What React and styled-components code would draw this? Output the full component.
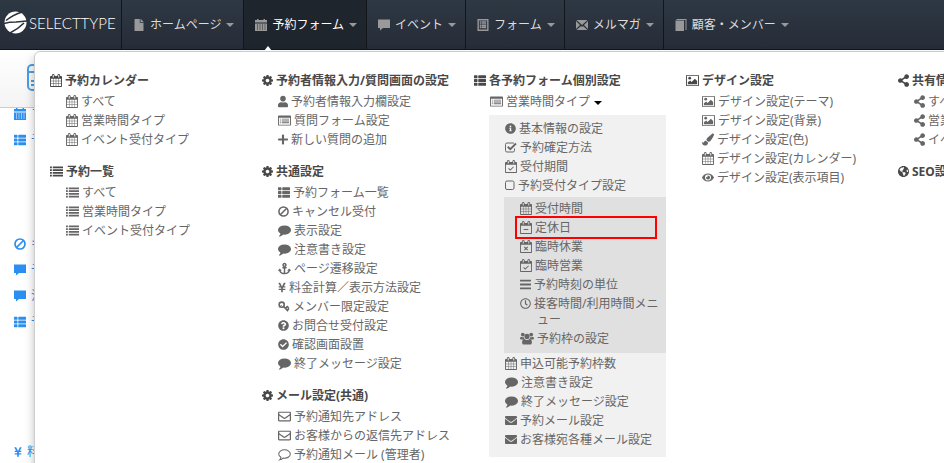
import React from 'react';
import styled, { createGlobalStyle, css } from 'styled-components';
import {
	FaUser, FaPlus, FaThList, FaAnchor, FaYenSign, FaQuestionCircle,
	FaCheckCircle, FaRegEnvelope, FaInfoCircle, FaBars, FaRegClock,
	FaEnvelope, FaPaintBrush, FaEye, FaShareAlt, FaGlobeAmericas, FaFile,
} from 'react-icons/fa';

const GlobalStyle = createGlobalStyle`
	* {
		box-sizing: border-box;
	}
	body {
		margin: 0;
		background: #fff;
		font-family: "Noto Sans", "Noto Sans CJK JP", sans-serif;
		font-size: 12px;
		line-height: 16px;
		color: #666;
	}
	a {
		color: inherit;
		text-decoration: none;
	}
	ul {
		list-style: none;
		margin: 0;
		padding: 0;
	}
`;

/* ---------- icons ---------- */

const calendarFrame = 'M640 480v-288q0-13-9.5-22.5t-22.5-9.5h-64q-13 0-22.5 9.5t-9.5 22.5v288q0 13 9.5 22.5t22.5 9.5h64q13 0 22.5-9.5t9.5-22.5zM1408 480v-288q0-13-9.5-22.5t-22.5-9.5h-64q-13 0-22.5 9.5t-9.5 22.5v288q0 13 9.5 22.5t22.5 9.5h64q13 0 22.5-9.5t9.5-22.5zM1792 416v1280q0 52-38 90t-90 38h-1408q-52 0-90-38t-38-90v-1280q0-52 38-90t90-38h128v-96q0-66 47-113t113-47h64q66 0 113 47t47 113v96h384v-96q0-66 47-113t113-47h64q66 0 113 47t47 113v96h128q52 0 90 38t38 90z';

const CalendarBase = ({ holes, children, ...rest }) => (
	<svg viewBox="128 22 1664 1802" fill="currentColor" {...rest}>
		<path fillRule="evenodd" d={`${calendarFrame}${holes}`} />
		{children}
	</svg>
);
const gridHoles = [[256, 288], [608, 320], [992, 320], [1376, 288]]
	.map(([x, w]) => [[672, 288], [1024, 288], [1376, 320]]
		.map(([y, h]) => `M${x} ${y}h${w}v${h}h-${w}z`).join(''))
	.join('');
const pageHole = 'M256 672h1408v1024h-1408z';

const Calendar = props => <CalendarBase holes={gridHoles} {...props} />;
const CalendarMinus = props => (
	<CalendarBase holes={pageHole} {...props}><path d="M640 1120h640v150h-640z" /></CalendarBase>
);
const CalendarTimes = props => (
	<CalendarBase holes={pageHole} {...props}>
		<path d="M720 960l480 480M1200 960l-480 480" stroke="currentColor" strokeWidth="150" />
	</CalendarBase>
);
const CalendarCheck = props => (
	<CalendarBase holes={pageHole} {...props}>
		<path d="M620 1180l240 240 460-460" fill="none" stroke="currentColor" strokeWidth="140" />
	</CalendarBase>
);
const CalendarSolid = props => (
	<svg viewBox="0 0 24 24" fill="currentColor" {...props}>
		<path fillRule="evenodd" d="M4 0h3v2h10v-2h3v2h4v5h-24v-5h4zM0 9h24v15h-24zM4 11v2h2v-2zM9 11v2h2v-2zM14 11v2h2v-2zM19 11v2h2v-2zM4 15v2h2v-2zM9 15v2h2v-2zM14 15v2h2v-2zM19 15v2h2v-2zM4 19v2h2v-2zM9 19v2h2v-2zM14 19v2h2v-2zM19 19v2h2v-2z" />
	</svg>
);
const List = props => (
	<svg viewBox="0 0 28 24" fill="currentColor" {...props}>
		<path d="M0 1h4v4h-4zM6 1h22v4h-22zM0 7h4v4h-4zM6 7h22v4h-22zM0 13h4v4h-4zM6 13h22v4h-22zM0 19h4v4h-4zM6 19h22v4h-22z" />
	</svg>
);
const ListAlt = props => (
	<svg viewBox="0 0 28 24" fill="currentColor" {...props}>
		<path fillRule="evenodd" d="M2 1h24q2 0 2 2v18q0 2-2 2h-24q-2 0-2-2v-18q0-2 2-2zM2 6v15h24v-15z" />
		<path d="M4 8h2v2h-2zM8 8h16v2h-16zM4 12h2v2h-2zM8 12h16v2h-16zM4 16h2v2h-2zM8 16h16v2h-16z" />
	</svg>
);
const FormList = props => (
	<svg viewBox="0 0 24 26" fill="currentColor" {...props}>
		<path fillRule="evenodd" d="M0 0h24v26h-24zM3 3v20h18v-20z" />
		<path d="M5 5h3v3h-3zM9 5h10v3h-10zM5 9h3v3h-3zM9 9h10v3h-10zM5 13h3v3h-3zM9 13h10v3h-10zM5 17h3v3h-3zM9 17h10v3h-10z" />
	</svg>
);
const Cog = props => (
	<svg viewBox="128 128 1536 1536" fill="currentColor" {...props}>
		<path d="M1152 896q0-106-75-181t-181-75-181 75-75 181 75 181 181 75 181-75 75-181zm512-109v222q0 12-8 23t-20 13l-185 28q-19 54-39 91 35 50 107 138 10 12 10 25t-9 23q-27 37-99 108t-94 71q-12 0-26-9l-138-108q-44 23-91 38-16 136-29 186-7 28-36 28h-222q-14 0-24.5-8.5t-11.5-21.5l-28-184q-49-16-90-37l-141 107q-10 9-25 9-14 0-25-11-126-114-165-168-7-10-7-23 0-12 8-23 15-21 51-66.5t54-70.5q-27-50-41-99l-183-27q-13-2-21-12.5t-8-23.5v-222q0-12 8-23t19-13l186-28q14-46 39-92-40-57-107-138-10-12-10-24 0-10 9-23 26-36 98.5-107.5t94.5-71.5q13 0 26 10l138 107q44-23 91-38 16-136 29-186 7-28 36-28h222q14 0 24.5 8.5t11.5 21.5l28 184q49 16 90 37l142-107q9-9 24-9 13 0 25 10 129 119 165 170 7 8 7 22 0 12-8 23-15 21-51 66.5t-54 70.5q26 50 41 98l183 28q13 2 21 12.5t8 23.5z" />
	</svg>
);
const Ban = props => (
	<svg viewBox="0 0 24 24" fill="none" stroke="currentColor" strokeWidth="3.4" {...props}>
		<circle cx="12" cy="12" r="10" />
		<path d="M5 19l14-14" />
	</svg>
);
const Key = props => (
	<svg viewBox="0 0 26 24" fill="none" stroke="currentColor" strokeWidth="3.4" {...props}>
		<circle cx="8" cy="8" r="5.5" />
		<path d="M12 12l10 10M16 16l4-4 3 3M20 20l4-4" />
		<path d="M3 14l5-5" strokeWidth="2" />
	</svg>
);
const Picture = props => (
	<svg viewBox="0 0 28 24" fill="currentColor" {...props}>
		<path fillRule="evenodd" d="M2 0h24q2 0 2 2v20q0 2-2 2h-24q-2 0-2-2v-20q0-2 2-2zM2 2v20h24v-20z" />
		<path d="M4 20v-4l5-4 3 3 7-7 5 5v7z" />
		<circle cx="8" cy="7" r="3" />
	</svg>
);
const Envelope = props => (
	<svg viewBox="0 0 24 20" fill="currentColor" {...props}>
		<path d="M1 0h22l-11 10zM0 2l8 8-8 8zM24 2l-8 8 8 8zM1 20l9-8 2 2 2-2 9 8z" />
	</svg>
);
const Notebook = props => (
	<svg viewBox="0 0 22 24" fill="currentColor" {...props}>
		<path d="M0 3h17v21h-17zM2 0h20v22h-2v-20h-18z" />
	</svg>
);
const Comment = props => (
	<svg viewBox="0 128 1792 1664" fill="currentColor" {...props}>
		<path d="M1792 896q0 174-120 321.5t-326 233-450 85.500q-70 0-145-8-198 175-460 242-49 14-114 22-17 2-30.500-9t-17.500-29v-1q-3-4-.5-12t2-10 4.500-9.500l6-9 7-8.500 8-9q7-8 31-34.500t34.500-38 31-39.500 32.500-51 27-59 26-76q-157-89-247.500-220t-90.500-281q0-130 71-248.500t191-204.500 286-136.500 348-50.500 348 50.500 286 136.500 191 204.500 71 248.500z" />
	</svg>
);
const CommentOutline = props => (
	<svg viewBox="0 0 28 26" fill="none" stroke="currentColor" strokeWidth="2.2" {...props}>
		<path d="M14 3c7 0 12.500 4 12.500 9s-5.500 9-12.500 9q-1.500 0-3-.2q-3 2.700-7.500 3.700q2.500-2.500 3-5.500q-5-2.500-5-7c0-5 5.500-9 12.500-9z" />
	</svg>
);
const Bubble = props => (
	<svg viewBox="0 0 24 22" fill="currentColor" {...props}>
		<path d="M0 0h24v17h-14l-6 5v-5h-4z" />
	</svg>
);
const Square = props => (
	<svg viewBox="0 0 20 20" fill="none" stroke="currentColor" strokeWidth="2" {...props}>
		<rect x="1" y="1" width="17" height="17" rx="3" />
	</svg>
);
const CheckSquare = props => (
	<svg viewBox="0 0 24 22" fill="none" stroke="currentColor" {...props}>
		<path d="M18 2.500q-1-.500-2-.500h-12q-3 0-3 3v12q0 3 3 3h12q3 0 3-3v-4" strokeWidth="2" />
		<path d="M5.500 9.500l5 5 11.500-11.500" strokeWidth="3.600" />
	</svg>
);
const Users = props => (
	<svg viewBox="0 0 30 26" fill="currentColor" {...props}>
		<circle cx="6" cy="4.500" r="4" />
		<circle cx="24" cy="4.500" r="4" />
		<circle cx="15" cy="8.500" r="5.500" />
		<path d="M0 14q0-5 3-5q2 1.500 5 1q0 3 2 5h-7q-3 0-3-1zM30 14q0-5-3-5q-2 1.500-5 1q0 3-2 5h7q3 0 3-1z" />
		<path d="M9.500 14q2 2 5.500 2t5.500-2q5 0 5 8q0 4-4 4h-13q-4 0-4-4q0-8 5-8z" />
	</svg>
);

/* ---------- top bar ---------- */

const Page = styled.div`
	position: relative;
	height: 100vh;
	overflow: hidden;
`;
const TopBar = styled.header`
	display: flex;
	height: 50px;
	background: linear-gradient(#2d3843, #272c38);
	border-bottom: 1px solid #12161b;
`;
const Brand = styled.a`
	display: flex;
	align-items: center;
	gap: 2px;
	width: 121px;
	padding: 0 0 4px 4px;
	color: #fff;
	font-family: Lato, sans-serif;
	font-size: 15px;
	font-weight: 300;
	svg {
		flex: none;
		width: 23px;
		height: 23px;
	}
`;
const Nav = styled.nav`
	display: flex;
`;
const NavLink = styled.a`
	position: relative;
	display: flex;
	align-items: center;
	gap: 5px;
	padding: 0 9px 0 11px;
	border-left: 1px solid #12161b;
	color: ${props => (props.$active ? '#fff' : '#ddd')};
	background: ${props => (props.$active ? '#1f252c' : 'none')};
	white-space: nowrap;
	> svg {
		width: 12px;
		height: 12px;
		color: #999;
	}
	${props => props.$active && css`
		&::after {
			content: '';
			position: absolute;
			z-index: 3;
			left: 20px;
			bottom: -2px;
			border: 4px solid transparent;
			border-top: 0;
			border-bottom: 5px solid #fff;
		}
	`}
`;
const Caret = styled.span`
	display: inline-block;
	border: 4px solid transparent;
	border-top-color: ${props => (props.$dark ? '#000' : '#999')};
	border-bottom: 0;
	vertical-align: ${props => (props.$dark ? '1px' : 'middle')};
	margin-left: ${props => (props.$dark ? 4 : 0)}px;
`;

/* ---------- page behind the menu ---------- */

const TitleBand = styled.div`
	height: 58px;
	padding: 14px 27px;
	border-bottom: 1px solid #ccc;
	background: linear-gradient(#fff, #f4f4f4);
	color: #4a9fe8;
	svg {
		display: block;
		width: 27px;
		height: 27px;
	}
`;
const SideList = styled.ul`
	padding: 0 14px;
	color: #2a8ff0;
`;
const SideItem = styled.li`
	display: flex;
	align-items: flex-start;
	gap: 5px;
	height: 26px;
	margin-top: ${props => (props.$skip || 0) * 26}px;
	line-height: 12px;
	svg {
		width: ${props => (props.$narrow ? 8 : 12)}px;
		height: 12px;
	}
`;

/* ---------- mega menu ---------- */

const MegaMenu = styled.div`
	position: absolute;
	z-index: 2;
	top: 51px;
	left: 34px;
	right: -8px;
	display: flex;
	padding: 19px 15px 40px;
	border: 1px solid #ccc;
	border-radius: 6px;
	background: #fff;
	box-shadow: 0 5px 10px rgba(0, 0, 0, 0.25);
	overflow: hidden;
`;
const Column = styled.div`
	flex: none;
	width: 212px;
`;
const Group = styled.section`
	margin-bottom: 13px;
`;
const rowText = css`
	margin: 0;
	padding: 2px 0 1px;
	font-size: 12px;
	line-height: 16px;
`;
const Heading = styled.h2`
	${rowText}
	margin-bottom: 2px;
	font-weight: bold;
	color: #484848;
	white-space: nowrap;
`;
const Entry = styled.li`
	${rowText}
	position: relative;
	padding-left: 33px;
	text-indent: -17px;
	line-break: normal;
	${props => props.$marked && css`
		&::after {
			content: '';
			position: absolute;
			top: -2px;
			bottom: -2px;
			left: 11px;
			right: 9px;
			border: 2px solid #f00;
		}
	`}
`;
const Glyph = styled.span`
	display: inline-block;
	width: ${props => props.$width}px;
	height: 13px;
	margin-right: 3px;
	vertical-align: -2px;
	text-indent: 0;
	svg {
		display: block;
		width: 100%;
		height: 13px;
	}
`;
const SubMenu = styled.ul`
	width: 177px;
	margin: 4px 0 0 15px;
	padding: 4px 0 8px;
	background: #f1f1f1;
`;
const InnerMenu = styled.ul`
	margin: 2px 0 1px 15px;
	padding: 2px 0 5px;
	background: #e0e0e0;
`;

const icons = {
	calendar: [Calendar, 12],
	calMinus: [CalendarMinus, 12],
	calTimes: [CalendarTimes, 12],
	calCheck: [CalendarCheck, 12],
	list: [List, 13],
	listAlt: [ListAlt, 13],
	cog: [Cog, 11],
	user: [FaUser, 10],
	plus: [FaPlus, 10],
	thList: [FaThList, 12],
	ban: [Ban, 11],
	comment: [Comment, 13],
	commentO: [CommentOutline, 13],
	anchor: [FaAnchor, 13],
	yen: [FaYenSign, 8],
	key: [Key, 12],
	question: [FaQuestionCircle, 11],
	check: [FaCheckCircle, 11],
	mail: [FaRegEnvelope, 13],
	info: [FaInfoCircle, 11],
	checkSq: [CheckSquare, 12],
	square: [Square, 10],
	bars: [FaBars, 11],
	clock: [FaRegClock, 11],
	users: [Users, 14],
	envelope: [FaEnvelope, 12],
	picture: [Picture, 13],
	brush: [FaPaintBrush, 12],
	eye: [FaEye, 12],
	share: [FaShareAlt, 11],
	globe: [FaGlobeAmericas, 11],
};

const Icon = ({ name }) => {
	const [Drawing, width] = icons[name];
	return <Glyph $width={width}><Drawing aria-hidden="true" /></Glyph>;
};

const Items = ({ rows }) => rows.map(([icon, text, marked]) => (
	<Entry key={text} $marked={marked}>
		<a href="#"><Icon name={icon} />{text}</a>
	</Entry>
));

const MenuGroup = ({ icon, title, rows, children }) => (
	<Group>
		<Heading><Icon name={icon} />{title}</Heading>
		{rows && <ul><Items rows={rows} /></ul>}
		{children}
	</Group>
);

const nav = [
	[FaFile, 'ホームページ'],
	[CalendarSolid, '予約フォーム', true],
	[Bubble, 'イベント'],
	[FormList, 'フォーム'],
	[Envelope, 'メルマガ'],
	[Notebook, '顧客・メンバー'],
];

const side = [
	[CalendarSolid, 'フ'],
	[FaThList, '予'],
	[Ban, 'キ', 3],
	[Bubble, '予'],
	[Bubble, '注'],
	[FaThList, '予'],
	[FaYenSign, '料', 4, true],
];

const types = icon => [
	[icon, 'すべて'],
	[icon, '営業時間タイプ'],
	[icon, 'イベント受付タイプ'],
];

export default function App() {
	return (
		<Page>
			<GlobalStyle />
			<TopBar>
				<Brand href="#">
					<svg viewBox="0 0 23 23" aria-hidden="true">
						<circle cx="11.5" cy="11.5" r="11" fill="#fff" />
						<path d="M0 12.500q5-1.500 12-1.500l11-1" fill="none" stroke="#2a333e" strokeWidth="1.600" />
						<path d="M2 9.500q6-5 16-8.500M6 22q8-4 14-10" fill="none" stroke="#2a333e" strokeWidth="1.600" />
					</svg>
					SELECTTYPE
				</Brand>
				<Nav>
					{nav.map(([Drawing, text, active]) => (
						<NavLink key={text} href="#" $active={active}>
							<Drawing aria-hidden="true" />
							{text}
							<Caret />
						</NavLink>
					))}
				</Nav>
			</TopBar>

			<MegaMenu>
				<Column>
					<MenuGroup icon="calendar" title="予約カレンダー" rows={types('calendar')} />
					<MenuGroup icon="list" title="予約一覧" rows={types('list')} />
				</Column>
				<Column>
					<MenuGroup
						icon="cog"
						title="予約者情報入力/質問画面の設定"
						rows={[
							['user', '予約者情報入力欄設定'],
							['listAlt', '質問フォーム設定'],
							['plus', '新しい質問の追加'],
						]}
					/>
					<MenuGroup
						icon="cog"
						title="共通設定"
						rows={[
							['thList', '予約フォーム一覧'],
							['ban', 'キャンセル受付'],
							['comment', '表示設定'],
							['comment', '注意書き設定'],
							['anchor', 'ページ遷移設定'],
							['yen', '料金計算／表示方法設定'],
							['key', 'メンバー限定設定'],
							['question', 'お問合せ受付設定'],
							['check', '確認画面設置'],
							['comment', '終了メッセージ設定'],
						]}
					/>
					<MenuGroup
						icon="cog"
						title="メール設定(共通)"
						rows={[
							['mail', '予約通知先アドレス'],
							['mail', 'お客様からの返信先アドレス'],
							['commentO', '予約通知メール (管理者)'],
						]}
					/>
				</Column>
				<Column>
					<MenuGroup icon="thList" title="各予約フォーム個別設定">
						<ul>
							<Entry><a href="#"><Icon name="listAlt" />営業時間タイプ<Caret $dark /></a></Entry>
						</ul>
						<SubMenu>
							<Items
								rows={[
									['info', '基本情報の設定'],
									['checkSq', '予約確定方法'],
									['calCheck', '受付期間'],
									['square', '予約受付タイプ設定'],
								]}
							/>
							<li>
								<InnerMenu>
									<Items
										rows={[
											['calendar', '受付時間'],
											['calMinus', '定休日', true],
											['calTimes', '臨時休業'],
											['calCheck', '臨時営業'],
											['bars', '予約時刻の単位'],
											['clock', '接客時間/利用時間メニュー'],
											['users', '予約枠の設定'],
										]}
									/>
								</InnerMenu>
							</li>
							<Items
								rows={[
									['calendar', '申込可能予約枠数'],
									['comment', '注意書き設定'],
									['comment', '終了メッセージ設定'],
									['envelope', '予約メール設定'],
									['envelope', 'お客様宛各種メール設定'],
								]}
							/>
						</SubMenu>
					</MenuGroup>
				</Column>
				<Column>
					<MenuGroup
						icon="picture"
						title="デザイン設定"
						rows={[
							['picture', 'デザイン設定(テーマ)'],
							['picture', 'デザイン設定(背景)'],
							['brush', 'デザイン設定(色)'],
							['calendar', 'デザイン設定(カレンダー)'],
							['eye', 'デザイン設定(表示項目)'],
						]}
					/>
				</Column>
				<Column>
					<MenuGroup icon="share" title="共有情報" rows={types('share')} />
					<MenuGroup icon="globe" title="SEO設定" />
				</Column>
			</MegaMenu>

			<TitleBand>
				<svg viewBox="0 0 27 27" fill="none" stroke="currentColor" strokeWidth="2" aria-hidden="true">
					<rect x="1" y="1" width="25" height="25" rx="4" />
					<path d="M1 8h25M4 17h3M4 21h3M11 17h3M11 21h3" />
				</svg>
			</TitleBand>
			<SideList>
				{side.map(([Drawing, text, skip, narrow], index) => (
					<SideItem key={index} $skip={skip} $narrow={narrow}>
						<Drawing aria-hidden="true" />
						{text}
					</SideItem>
				))}
			</SideList>
		</Page>
	);
}
